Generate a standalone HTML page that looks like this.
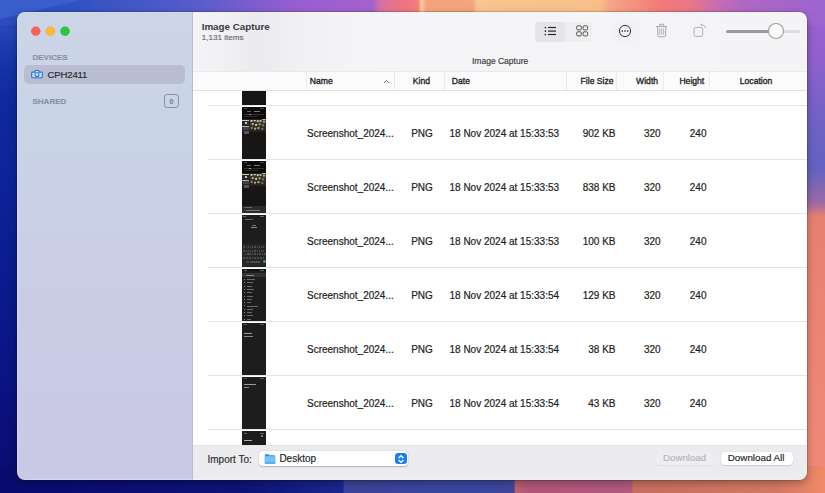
<!DOCTYPE html><html><head><meta charset="utf-8"><style>
*{margin:0;padding:0;box-sizing:border-box}
html,body{width:825px;height:493px;overflow:hidden;font-family:"Liberation Sans",sans-serif}
body{position:relative;background:#1a2a9a}
.a{position:absolute}
.t{position:absolute;white-space:nowrap;line-height:1;-webkit-text-stroke-width:0.15px}
#win{position:absolute;left:17px;top:12px;width:790px;height:468px;border-radius:8px;overflow:hidden;box-shadow:0 0 0 0.5px rgba(0,0,0,0.25),0 3px 8px rgba(0,0,0,0.3)}
#in{position:absolute;left:-17px;top:-12px;width:825px;height:493px}
.hd{position:absolute;top:76.9px;font-size:8.6px;font-weight:normal;color:#222;white-space:nowrap;line-height:1;-webkit-text-stroke:0.32px #222}
.sep{position:absolute;top:72px;width:1px;height:18px;background:#ebebed}
.rs{position:absolute;left:208px;width:599px;height:1px;background:#e5e5e7}
.c{position:absolute;font-size:10px;color:#1e1e1e;white-space:nowrap;line-height:1;-webkit-text-stroke:0.2px #1e1e1e}
.th{position:absolute;left:242px;width:24px;background:#1c1b1b;overflow:hidden}
</style></head><body>
<svg class="a" style="left:0;top:0" width="825" height="493">
<defs>
<linearGradient id="gt" x1="0" y1="0" x2="825" y2="0" gradientUnits="userSpaceOnUse">
<stop offset="0.0000" stop-color="#2c4cbc"/>
<stop offset="0.0970" stop-color="#3153c2"/>
<stop offset="0.2424" stop-color="#5a5ccc"/>
<stop offset="0.3030" stop-color="#7a5ece"/>
<stop offset="0.3636" stop-color="#985fd0"/>
<stop offset="0.4121" stop-color="#a060d0"/>
<stop offset="0.4509" stop-color="#a462cc"/>
<stop offset="0.4606" stop-color="#d070a8"/>
<stop offset="0.4727" stop-color="#e67290"/>
<stop offset="0.4945" stop-color="#ee7680"/>
<stop offset="0.5067" stop-color="#f28078"/>
<stop offset="0.5109" stop-color="#f8cca0"/>
<stop offset="0.5170" stop-color="#f4a47c"/>
<stop offset="0.5733" stop-color="#f4a47e"/>
<stop offset="0.5782" stop-color="#f8c490"/>
<stop offset="0.7273" stop-color="#f8c088"/>
<stop offset="0.7382" stop-color="#f6a688"/>
<stop offset="0.8000" stop-color="#f27c78"/>
<stop offset="0.8352" stop-color="#ec7684"/>
<stop offset="0.8655" stop-color="#cc6eb0"/>
<stop offset="0.8994" stop-color="#b068c4"/>
<stop offset="1.0000" stop-color="#9c64d0"/>
</linearGradient>
<linearGradient id="gb" x1="0" y1="0" x2="825" y2="0" gradientUnits="userSpaceOnUse">
<stop offset="0" stop-color="#0a0a6e"/>
<stop offset="0.30" stop-color="#0e1478"/>
<stop offset="0.416" stop-color="#18298e"/>
<stop offset="0.417" stop-color="#3c4498"/>
<stop offset="0.58" stop-color="#3848a0"/>
<stop offset="0.623" stop-color="#414898"/>
<stop offset="0.625" stop-color="#c06070"/>
<stop offset="0.64" stop-color="#b05878"/>
<stop offset="0.765" stop-color="#b05a80"/>
<stop offset="0.768" stop-color="#c87060"/>
<stop offset="0.94" stop-color="#d27a62"/>
<stop offset="1" stop-color="#f08868"/>
</linearGradient>
<linearGradient id="gl" x1="0" y1="0" x2="0" y2="493" gradientUnits="userSpaceOnUse">
<stop offset="0" stop-color="#2c4cbc"/>
<stop offset="0.06" stop-color="#2446b6"/>
<stop offset="0.12" stop-color="#1636aa"/>
<stop offset="0.2" stop-color="#0e2a9e"/>
<stop offset="0.4" stop-color="#0c2296"/>
<stop offset="0.6" stop-color="#0a1a8c"/>
<stop offset="0.8" stop-color="#0a1280"/>
<stop offset="1" stop-color="#0a0a6c"/>
</linearGradient>
<linearGradient id="gr" x1="0" y1="0" x2="0" y2="493" gradientUnits="userSpaceOnUse">
<stop offset="0" stop-color="#a060d0"/>
<stop offset="0.12" stop-color="#9060d0"/>
<stop offset="0.2" stop-color="#7a62c8"/>
<stop offset="0.34" stop-color="#6262c2"/>
<stop offset="0.41" stop-color="#9a6aa8"/>
<stop offset="0.44" stop-color="#e88070"/>
<stop offset="1" stop-color="#f08a78"/>
</linearGradient>
</defs>
<rect x="0" y="0" width="825" height="493" fill="#1a2a9a"/>
<rect x="0" y="0" width="30" height="493" fill="url(#gl)"/>
<rect x="795" y="0" width="30" height="493" fill="url(#gr)"/>
<rect x="0" y="0" width="825" height="25" fill="url(#gt)"/>
<polygon points="0,0 81,0 0,19" fill="#3a60cc" opacity="0.9"/>
<rect x="0" y="466" width="825" height="27" fill="url(#gb)"/>
</svg>
<div id="win"><div id="in">
<div class="a" style="left:17px;top:12px;width:176px;height:468px;background:linear-gradient(180deg,#ccd5e8 0%,#c9d3e6 30%,#cacde6 58%,#c9c8e5 100%);border-right:1px solid #b8bccc"></div>
<svg class="a" style="left:25px;top:21px" width="50" height="20">
<circle cx="10.8" cy="10.2" r="4.4" fill="#fe5f57" stroke="#e24b44" stroke-width="0.5"/>
<circle cx="25.45" cy="10.2" r="4.4" fill="#febc2e" stroke="#dea224" stroke-width="0.5"/>
<circle cx="40" cy="10.2" r="4.4" fill="#28c840" stroke="#1eac2c" stroke-width="0.5"/>
</svg>
<div class="t" style="left:32.5px;top:53.8px;font-size:8px;font-weight:bold;color:#8b90a4">DEVICES</div>
<div class="a" style="left:24px;top:64.5px;width:161px;height:19.5px;background:#b8bdd0;border-radius:5px"></div>
<svg class="a" style="left:30.5px;top:69px" width="12" height="11" viewBox="0 0 12 11">
<path d="M1.4 3.1 h2.2 l0.8 -1.6 h3.2 l0.8 1.6 h2.2 a0.7 0.7 0 0 1 0.7 0.7 v4.3 a0.7 0.7 0 0 1 -0.7 0.7 h-9.2 a0.7 0.7 0 0 1 -0.7 -0.7 v-4.3 a0.7 0.7 0 0 1 0.7 -0.7z" fill="#d2e2f6" stroke="#1f74e0" stroke-width="1.1"/>
<circle cx="6" cy="5.5" r="2" fill="#dfe8f4" stroke="#1f74e0" stroke-width="1.1"/>
</svg>
<div class="t" style="left:47.6px;top:69.8px;font-size:9.6px;letter-spacing:-0.2px;color:#262a34">CPH2411</div>
<div class="t" style="left:32.5px;top:97.5px;font-size:8px;font-weight:bold;color:#8b90a4">SHARED</div>
<div class="a" style="left:164.2px;top:94px;width:14.6px;height:13.8px;border:1px solid #8a8fa2;border-radius:3.2px"></div>
<div class="t" style="left:169.4px;top:98px;font-size:7px;font-weight:bold;color:#7d8295">0</div>
<div class="a" style="left:193px;top:12px;width:614px;height:59px;background:linear-gradient(90deg,#f5f5f7 0px,#efeff2 40px,#ebebef 65px,#f1f1f4 110px,#f5f5f7 170px,#f4f4f6 100%)"></div>
<div class="t" style="left:201.7px;top:22.4px;font-size:9.8px;font-weight:bold;color:#3a3a3c;-webkit-text-stroke-width:0">Image Capture</div>
<div class="t" style="left:201.7px;top:34.3px;font-size:8.1px;color:#68686d">1,131 items</div>
<div class="t" style="left:472px;top:56.8px;font-size:8.5px;color:#3a3a3a">Image Capture</div>
<div class="a" style="left:535px;top:21.5px;width:57px;height:20px;background:#eeeef0;border-radius:4px"></div>
<div class="a" style="left:535px;top:21.5px;width:30px;height:20px;background:#e5e5e7;border-radius:4px 0 0 4px"></div>
<svg class="a" style="left:540px;top:22px" width="20" height="18">
<circle cx="5.4" cy="5.5" r="0.85" fill="#2a2a2a"/><circle cx="5.4" cy="9.1" r="0.85" fill="#2a2a2a"/><circle cx="5.4" cy="12.5" r="0.85" fill="#2a2a2a"/>
<rect x="8" y="4.9" width="8" height="1.2" fill="#2a2a2a"/><rect x="8" y="8.5" width="8" height="1.2" fill="#2a2a2a"/><rect x="8" y="11.9" width="8" height="1.2" fill="#2a2a2a"/>
</svg>
<svg class="a" style="left:575px;top:24px" width="15" height="14">
<rect x="1.7" y="1.8" width="4.6" height="4.1" rx="1.1" fill="none" stroke="#555" stroke-width="1"/>
<rect x="8.1" y="1.8" width="4.5" height="4.1" rx="1.1" fill="none" stroke="#555" stroke-width="1"/>
<rect x="1.7" y="7.8" width="4.6" height="4.1" rx="1.1" fill="none" stroke="#555" stroke-width="1"/>
<rect x="8.1" y="7.8" width="4.5" height="4.1" rx="1.1" fill="none" stroke="#555" stroke-width="1"/>
</svg>
<div class="a" style="left:612.5px;top:21.5px;width:27.5px;height:20px;background:#f2f2f4;border-radius:4px"></div>
<svg class="a" style="left:617px;top:23px" width="16" height="16">
<circle cx="8" cy="8" r="5.6" fill="none" stroke="#333" stroke-width="1"/>
<circle cx="5.3" cy="8" r="0.85" fill="#333"/><circle cx="8" cy="8" r="0.85" fill="#333"/><circle cx="10.7" cy="8" r="0.85" fill="#333"/>
</svg>
<svg class="a" style="left:654px;top:22px" width="16" height="16">
<path d="M2.2 4.5 h10.9" fill="none" stroke="#a9a9ab" stroke-width="1"/>
<path d="M5.6 4.4 v-2.1 h4.1 v2.1" fill="none" stroke="#a9a9ab" stroke-width="1"/>
<path d="M3.6 4.6 l0.2 9.3 a1 1 0 0 0 1 0.9 h5.8 a1 1 0 0 0 1 -0.9 l0.2 -9.3" fill="none" stroke="#a9a9ab" stroke-width="1"/>
<path d="M5.7 6.3 v6.5 M7.65 6.3 v6.5 M9.6 6.3 v6.5" fill="none" stroke="#a9a9ab" stroke-width="0.85"/>
</svg>
<svg class="a" style="left:690px;top:22px" width="18" height="16">
<rect x="4.1" y="5.4" width="8.6" height="9" rx="1.6" fill="none" stroke="#b0b0b2" stroke-width="1"/>
<path d="M15.9 6.3 A4.6 4.6 0 0 0 11.6 2.7" fill="none" stroke="#b0b0b2" stroke-width="0.9"/>
<path d="M10.1 2.7 l2 -1.3 v2.6z" fill="#b0b0b2"/>
</svg>
<div class="a" style="left:725.6px;top:30px;width:52px;height:2.8px;background:#9a9a9c;border-radius:1.5px"></div>
<div class="a" style="left:776px;top:30px;width:24px;height:2.8px;background:#dcdcde;border-radius:1.5px"></div>
<div class="a" style="left:768.8px;top:24.4px;width:14px;height:14px;border-radius:50%;background:#fbfbfc;box-shadow:0 0 0 1px #9c9c9e"></div>
<div class="a" style="left:193px;top:70.5px;width:614px;height:20px;background:#fbfbfc;border-top:1px solid #e9e9eb;border-bottom:1px solid #e2e2e4"></div>
<div class="sep" style="left:305.5px"></div>
<div class="sep" style="left:394.3px"></div>
<div class="sep" style="left:443.5px"></div>
<div class="sep" style="left:566px"></div>
<div class="sep" style="left:616px"></div>
<div class="sep" style="left:662.6px"></div>
<div class="sep" style="left:708.7px"></div>
<div class="hd" style="left:309.8px">Name</div>
<div class="hd" style="left:412.8px">Kind</div>
<div class="hd" style="left:451.8px">Date</div>
<div class="hd" style="left:580.6px">File Size</div>
<div class="hd" style="left:636.1px">Width</div>
<div class="hd" style="left:679.4px">Height</div>
<div class="hd" style="left:739.8px">Location</div>
<svg class="a" style="left:382px;top:77.5px" width="9" height="7"><path d="M2 5 L4.5 2.5 L7 5" fill="none" stroke="#666" stroke-width="0.9"/></svg>
<div class="a" style="left:193px;top:91px;width:614px;height:354px;background:#fff"></div>
<div class="rs" style="top:105.0px"></div>
<div class="rs" style="top:159.0px"></div>
<div class="rs" style="top:213.0px"></div>
<div class="rs" style="top:267.0px"></div>
<div class="rs" style="top:321.0px"></div>
<div class="rs" style="top:375.0px"></div>
<div class="rs" style="top:429.0px"></div>
<div class="c" style="left:307px;top:129.4px">Screenshot_2024...</div>
<div class="c" style="left:411.2px;top:129.4px">PNG</div>
<div class="c" style="left:449.5px;top:129.4px">18 Nov 2024 at 15:33:53</div>
<div class="c" style="left:555px;width:60.5px;text-align:right;top:129.4px">902 KB</div>
<div class="c" style="left:644px;top:129.4px">320</div>
<div class="c" style="left:689.8px;top:129.4px">240</div>
<div class="c" style="left:307px;top:183.4px">Screenshot_2024...</div>
<div class="c" style="left:411.2px;top:183.4px">PNG</div>
<div class="c" style="left:449.5px;top:183.4px">18 Nov 2024 at 15:33:53</div>
<div class="c" style="left:555px;width:60.5px;text-align:right;top:183.4px">838 KB</div>
<div class="c" style="left:644px;top:183.4px">320</div>
<div class="c" style="left:689.8px;top:183.4px">240</div>
<div class="c" style="left:307px;top:237.4px">Screenshot_2024...</div>
<div class="c" style="left:411.2px;top:237.4px">PNG</div>
<div class="c" style="left:449.5px;top:237.4px">18 Nov 2024 at 15:33:53</div>
<div class="c" style="left:555px;width:60.5px;text-align:right;top:237.4px">100 KB</div>
<div class="c" style="left:644px;top:237.4px">320</div>
<div class="c" style="left:689.8px;top:237.4px">240</div>
<div class="c" style="left:307px;top:291.4px">Screenshot_2024...</div>
<div class="c" style="left:411.2px;top:291.4px">PNG</div>
<div class="c" style="left:449.5px;top:291.4px">18 Nov 2024 at 15:33:54</div>
<div class="c" style="left:555px;width:60.5px;text-align:right;top:291.4px">129 KB</div>
<div class="c" style="left:644px;top:291.4px">320</div>
<div class="c" style="left:689.8px;top:291.4px">240</div>
<div class="c" style="left:307px;top:345.4px">Screenshot_2024...</div>
<div class="c" style="left:411.2px;top:345.4px">PNG</div>
<div class="c" style="left:449.5px;top:345.4px">18 Nov 2024 at 15:33:54</div>
<div class="c" style="left:555px;width:60.5px;text-align:right;top:345.4px">38 KB</div>
<div class="c" style="left:644px;top:345.4px">320</div>
<div class="c" style="left:689.8px;top:345.4px">240</div>
<div class="c" style="left:307px;top:399.4px">Screenshot_2024...</div>
<div class="c" style="left:411.2px;top:399.4px">PNG</div>
<div class="c" style="left:449.5px;top:399.4px">18 Nov 2024 at 15:33:54</div>
<div class="c" style="left:555px;width:60.5px;text-align:right;top:399.4px">43 KB</div>
<div class="c" style="left:644px;top:399.4px">320</div>
<div class="c" style="left:689.8px;top:399.4px">240</div>
<div class="th" style="top:91px;height:13.8px;background:#141414"><div class="a" style="left:0;top:0;width:24px;height:13.8px;filter:blur(0.35px)"></div></div>
<div class="th" style="top:107px;height:52px;background:#181614"><div class="a" style="left:0;top:0;width:24px;height:52px;filter:blur(0.35px)"><div class="a" style="left:0px;top:0px;width:24px;height:11.5px;background:#0b0b0b;"></div><div class="a" style="left:2px;top:1px;width:3px;height:0.7px;background:#444;"></div><div class="a" style="left:18px;top:1px;width:4px;height:0.7px;background:#444;"></div><div class="a" style="left:5px;top:3.6px;width:3.5px;height:0.9px;background:#666;"></div><div class="a" style="left:11.5px;top:3.6px;width:6px;height:0.9px;background:#777;"></div><div class="a" style="left:2px;top:7px;width:20px;height:0.8px;background:#333;"></div><div class="a" style="left:7px;top:7px;width:2px;height:0.9px;background:#999;"></div><div class="a" style="left:2px;top:9.2px;width:14px;height:0.7px;background:#2a2a2a;"></div><div class="a" style="left:0px;top:11.8px;width:24px;height:13px;background:#24221c;"></div><div class="a" style="left:0px;top:12.6px;width:7px;height:1.3px;background:#c8c8c8;"></div><div class="a" style="left:19.5px;top:12.4px;width:4.5px;height:1.2px;background:#b0b0b0;"></div><div class="a" style="left:0.5px;top:14.2px;width:6px;height:3.6px;background:#2a2a26;"></div><div class="a" style="left:2.6px;top:15.2px;width:2px;height:1.4px;background:#c8c8b0;"></div><div class="a" style="left:0px;top:18.6px;width:7px;height:1.1px;background:#b0b0b0;"></div><div class="a" style="left:0.5px;top:20px;width:6px;height:3px;background:#40425a;"></div><div class="a" style="left:7.5px;top:12.5px;width:16.5px;height:11.5px;background:radial-gradient(circle at 1.5px 0.7px,#d8d0a8 0,#d8d0a8 0.6px,rgba(0,0,0,0) 1.6px),radial-gradient(circle at 4.7px 0.3px,#e0d8b8 0,#e0d8b8 0.6px,rgba(0,0,0,0) 1.6px),radial-gradient(circle at 7.8px 1.1px,#c8c0a0 0,#c8c0a0 0.6px,rgba(0,0,0,0) 1.6px),radial-gradient(circle at 10.5px 0.9px,#b8b4a0 0,#b8b4a0 0.6px,rgba(0,0,0,0) 1.6px),radial-gradient(circle at 14.0px 1.7px,#a8a090 0,#a8a090 0.6px,rgba(0,0,0,0) 1.6px),radial-gradient(circle at 2.7px 4.1px,#b8a888 0,#b8a888 0.6px,rgba(0,0,0,0) 1.6px),radial-gradient(circle at 6.1px 4.9px,#d0c8a8 0,#d0c8a8 0.6px,rgba(0,0,0,0) 1.6px),radial-gradient(circle at 9.7px 4.3px,#98a088 0,#98a088 0.6px,rgba(0,0,0,0) 1.6px),radial-gradient(circle at 13.0px 5.3px,#807868 0,#807868 0.6px,rgba(0,0,0,0) 1.6px),radial-gradient(circle at 1.7px 7.9px,#908068 0,#908068 0.6px,rgba(0,0,0,0) 1.6px),radial-gradient(circle at 5.1px 8.7px,#b0a088 0,#b0a088 0.6px,rgba(0,0,0,0) 1.6px),radial-gradient(circle at 8.5px 8.1px,#a8a898 0,#a8a898 0.6px,rgba(0,0,0,0) 1.6px),radial-gradient(circle at 12.3px 8.9px,#7a7060 0,#7a7060 0.6px,rgba(0,0,0,0) 1.6px),linear-gradient(180deg,#3a3628,#2a261e)"></div><div class="a" style="left:1.8px;top:23.8px;width:5px;height:3.6px;background:#555;"></div></div></div>
<div class="th" style="top:161px;height:52px;background:#181614"><div class="a" style="left:0;top:0;width:24px;height:52px;filter:blur(0.35px)"><div class="a" style="left:0px;top:0px;width:24px;height:11.5px;background:#0b0b0b;"></div><div class="a" style="left:2px;top:1px;width:3px;height:0.7px;background:#444;"></div><div class="a" style="left:18px;top:1px;width:4px;height:0.7px;background:#444;"></div><div class="a" style="left:5px;top:3.6px;width:3.5px;height:0.9px;background:#666;"></div><div class="a" style="left:11.5px;top:3.6px;width:6px;height:0.9px;background:#777;"></div><div class="a" style="left:2px;top:7px;width:20px;height:0.8px;background:#333;"></div><div class="a" style="left:7px;top:7px;width:2px;height:0.9px;background:#999;"></div><div class="a" style="left:2px;top:9.2px;width:14px;height:0.7px;background:#2a2a2a;"></div><div class="a" style="left:0px;top:11.8px;width:24px;height:13px;background:#24221c;"></div><div class="a" style="left:0px;top:12.6px;width:7px;height:1.3px;background:#c8c8c8;"></div><div class="a" style="left:19.5px;top:12.4px;width:4.5px;height:1.2px;background:#b0b0b0;"></div><div class="a" style="left:0.5px;top:14.2px;width:6px;height:3.6px;background:#2a2a26;"></div><div class="a" style="left:2.6px;top:15.2px;width:2px;height:1.4px;background:#c8c8b0;"></div><div class="a" style="left:0px;top:18.6px;width:7px;height:1.1px;background:#b0b0b0;"></div><div class="a" style="left:0.5px;top:20px;width:6px;height:3px;background:#40425a;"></div><div class="a" style="left:7.5px;top:12.5px;width:16.5px;height:11.5px;background:radial-gradient(circle at 1.5px 0.7px,#d8d0a8 0,#d8d0a8 0.6px,rgba(0,0,0,0) 1.6px),radial-gradient(circle at 4.7px 0.3px,#e0d8b8 0,#e0d8b8 0.6px,rgba(0,0,0,0) 1.6px),radial-gradient(circle at 7.8px 1.1px,#c8c0a0 0,#c8c0a0 0.6px,rgba(0,0,0,0) 1.6px),radial-gradient(circle at 10.5px 0.9px,#b8b4a0 0,#b8b4a0 0.6px,rgba(0,0,0,0) 1.6px),radial-gradient(circle at 14.0px 1.7px,#a8a090 0,#a8a090 0.6px,rgba(0,0,0,0) 1.6px),radial-gradient(circle at 2.7px 4.1px,#b8a888 0,#b8a888 0.6px,rgba(0,0,0,0) 1.6px),radial-gradient(circle at 6.1px 4.9px,#d0c8a8 0,#d0c8a8 0.6px,rgba(0,0,0,0) 1.6px),radial-gradient(circle at 9.7px 4.3px,#98a088 0,#98a088 0.6px,rgba(0,0,0,0) 1.6px),radial-gradient(circle at 13.0px 5.3px,#807868 0,#807868 0.6px,rgba(0,0,0,0) 1.6px),radial-gradient(circle at 1.7px 7.9px,#908068 0,#908068 0.6px,rgba(0,0,0,0) 1.6px),radial-gradient(circle at 5.1px 8.7px,#b0a088 0,#b0a088 0.6px,rgba(0,0,0,0) 1.6px),radial-gradient(circle at 8.5px 8.1px,#a8a898 0,#a8a898 0.6px,rgba(0,0,0,0) 1.6px),radial-gradient(circle at 12.3px 8.9px,#7a7060 0,#7a7060 0.6px,rgba(0,0,0,0) 1.6px),linear-gradient(180deg,#3a3628,#2a261e)"></div><div class="a" style="left:1.8px;top:23.8px;width:5px;height:3.6px;background:#555;"></div><div class="a" style="left:0px;top:44.5px;width:24px;height:7px;background:#2c2c2c;"></div><div class="a" style="left:2px;top:46px;width:8px;height:0.8px;background:#666;"></div><div class="a" style="left:4px;top:49px;width:14px;height:1px;background:#777;"></div></div></div>
<div class="th" style="top:215px;height:52px;background:#1e1d1d"><div class="a" style="left:0;top:0;width:24px;height:52px;filter:blur(0.35px)"><div class="a" style="left:1px;top:1px;width:3px;height:0.8px;background:#666;"></div><div class="a" style="left:18px;top:1px;width:4px;height:0.8px;background:#666;"></div><div class="a" style="left:3px;top:4px;width:8px;height:0.9px;background:#666;"></div><div class="a" style="left:10px;top:10px;width:4px;height:0.9px;background:#777;"></div><div class="a" style="left:9px;top:12px;width:6px;height:0.9px;background:#888;"></div><div class="a" style="left:0px;top:29px;width:24px;height:23px;background:#262626;"></div><div class="a" style="left:1.3px;top:31px;width:1.4000000000000001px;height:2.2px;background:#4c4c4c;"></div><div class="a" style="left:3.5px;top:31px;width:1.4000000000000001px;height:2.2px;background:#4c4c4c;"></div><div class="a" style="left:5.7px;top:31px;width:1.4000000000000001px;height:2.2px;background:#4c4c4c;"></div><div class="a" style="left:7.9px;top:31px;width:1.4000000000000001px;height:2.2px;background:#4c4c4c;"></div><div class="a" style="left:10.100000000000001px;top:31px;width:1.4000000000000001px;height:2.2px;background:#4c4c4c;"></div><div class="a" style="left:12.3px;top:31px;width:1.4000000000000001px;height:2.2px;background:#4c4c4c;"></div><div class="a" style="left:14.500000000000002px;top:31px;width:1.4000000000000001px;height:2.2px;background:#4c4c4c;"></div><div class="a" style="left:16.700000000000003px;top:31px;width:1.4000000000000001px;height:2.2px;background:#4c4c4c;"></div><div class="a" style="left:18.900000000000002px;top:31px;width:1.4000000000000001px;height:2.2px;background:#4c4c4c;"></div><div class="a" style="left:21.1px;top:31px;width:1.4000000000000001px;height:2.2px;background:#4c4c4c;"></div><div class="a" style="left:1.3px;top:34.5px;width:1.4000000000000001px;height:2.2px;background:#4c4c4c;"></div><div class="a" style="left:3.5px;top:34.5px;width:1.4000000000000001px;height:2.2px;background:#4c4c4c;"></div><div class="a" style="left:5.7px;top:34.5px;width:1.4000000000000001px;height:2.2px;background:#4c4c4c;"></div><div class="a" style="left:7.9px;top:34.5px;width:1.4000000000000001px;height:2.2px;background:#4c4c4c;"></div><div class="a" style="left:10.100000000000001px;top:34.5px;width:1.4000000000000001px;height:2.2px;background:#4c4c4c;"></div><div class="a" style="left:12.3px;top:34.5px;width:1.4000000000000001px;height:2.2px;background:#4c4c4c;"></div><div class="a" style="left:14.500000000000002px;top:34.5px;width:1.4000000000000001px;height:2.2px;background:#4c4c4c;"></div><div class="a" style="left:16.700000000000003px;top:34.5px;width:1.4000000000000001px;height:2.2px;background:#4c4c4c;"></div><div class="a" style="left:18.900000000000002px;top:34.5px;width:1.4000000000000001px;height:2.2px;background:#4c4c4c;"></div><div class="a" style="left:21.1px;top:34.5px;width:1.4000000000000001px;height:2.2px;background:#4c4c4c;"></div><div class="a" style="left:2.5px;top:38px;width:1.6444444444444446px;height:2.2px;background:#4c4c4c;"></div><div class="a" style="left:4.944444444444445px;top:38px;width:1.6444444444444446px;height:2.2px;background:#4c4c4c;"></div><div class="a" style="left:7.388888888888889px;top:38px;width:1.6444444444444446px;height:2.2px;background:#4c4c4c;"></div><div class="a" style="left:9.833333333333334px;top:38px;width:1.6444444444444446px;height:2.2px;background:#4c4c4c;"></div><div class="a" style="left:12.277777777777779px;top:38px;width:1.6444444444444446px;height:2.2px;background:#4c4c4c;"></div><div class="a" style="left:14.722222222222223px;top:38px;width:1.6444444444444446px;height:2.2px;background:#4c4c4c;"></div><div class="a" style="left:17.166666666666668px;top:38px;width:1.6444444444444446px;height:2.2px;background:#4c4c4c;"></div><div class="a" style="left:19.611111111111114px;top:38px;width:1.6444444444444446px;height:2.2px;background:#4c4c4c;"></div><div class="a" style="left:22.055555555555557px;top:38px;width:1.6444444444444446px;height:2.2px;background:#4c4c4c;"></div><div class="a" style="left:1.3px;top:41.5px;width:1.95px;height:2.2px;background:#4c4c4c;"></div><div class="a" style="left:4.05px;top:41.5px;width:1.95px;height:2.2px;background:#4c4c4c;"></div><div class="a" style="left:6.8px;top:41.5px;width:1.95px;height:2.2px;background:#4c4c4c;"></div><div class="a" style="left:9.55px;top:41.5px;width:1.95px;height:2.2px;background:#4c4c4c;"></div><div class="a" style="left:12.3px;top:41.5px;width:1.95px;height:2.2px;background:#4c4c4c;"></div><div class="a" style="left:15.05px;top:41.5px;width:1.95px;height:2.2px;background:#4c4c4c;"></div><div class="a" style="left:17.8px;top:41.5px;width:1.95px;height:2.2px;background:#4c4c4c;"></div><div class="a" style="left:20.55px;top:41.5px;width:1.95px;height:2.2px;background:#4c4c4c;"></div><div class="a" style="left:4px;top:45.5px;width:3px;height:2.2px;background:#444;"></div><div class="a" style="left:8px;top:45.5px;width:10px;height:2.2px;background:#4c4c4c;"></div><div class="a" style="left:20.5px;top:45px;width:3px;height:3px;background:#3a9a70;border-radius:50%"></div></div></div>
<div class="th" style="top:269px;height:52px;background:#1e1d1d"><div class="a" style="left:0;top:0;width:24px;height:52px;filter:blur(0.35px)"><div class="a" style="left:0px;top:0px;width:24px;height:1.5px;background:#111;"></div><div class="a" style="left:2px;top:1px;width:3px;height:0.8px;background:#666;"></div><div class="a" style="left:18px;top:1px;width:4px;height:0.8px;background:#666;"></div><div class="a" style="left:0px;top:4px;width:24px;height:4px;background:#333;"></div><div class="a" style="left:4px;top:5.5px;width:8px;height:1px;background:#888;"></div><div class="a" style="left:1.8px;top:10.0px;width:1.1px;height:1.1px;background:#b0b0b0;border-radius:50%"></div><div class="a" style="left:4.5px;top:10.1px;width:8px;height:0.9px;background:#6a6a6a;"></div><div class="a" style="left:1.8px;top:13.3px;width:1.1px;height:1.1px;background:#b0b0b0;border-radius:50%"></div><div class="a" style="left:4.5px;top:13.4px;width:6px;height:0.9px;background:#6a6a6a;"></div><div class="a" style="left:1.8px;top:16.6px;width:1.1px;height:1.1px;background:#b0b0b0;border-radius:50%"></div><div class="a" style="left:4.5px;top:16.700000000000003px;width:5px;height:0.9px;background:#6a6a6a;"></div><div class="a" style="left:1.8px;top:19.9px;width:1.1px;height:1.1px;background:#b0b0b0;border-radius:50%"></div><div class="a" style="left:4.5px;top:20.0px;width:7px;height:0.9px;background:#6a6a6a;"></div><div class="a" style="left:1.8px;top:23.2px;width:1.1px;height:1.1px;background:#b0b0b0;border-radius:50%"></div><div class="a" style="left:4.5px;top:23.3px;width:5px;height:0.9px;background:#6a6a6a;"></div><div class="a" style="left:1.8px;top:26.5px;width:1.1px;height:1.1px;background:#b0b0b0;border-radius:50%"></div><div class="a" style="left:4.5px;top:26.6px;width:6px;height:0.9px;background:#6a6a6a;"></div><div class="a" style="left:1.8px;top:29.799999999999997px;width:1.1px;height:1.1px;background:#b0b0b0;border-radius:50%"></div><div class="a" style="left:4.5px;top:29.9px;width:5px;height:0.9px;background:#6a6a6a;"></div><div class="a" style="left:1.8px;top:33.099999999999994px;width:1.1px;height:1.1px;background:#b0b0b0;border-radius:50%"></div><div class="a" style="left:4.5px;top:33.199999999999996px;width:4px;height:0.9px;background:#6a6a6a;"></div><div class="a" style="left:1.8px;top:36.4px;width:1.1px;height:1.1px;background:#b0b0b0;border-radius:50%"></div><div class="a" style="left:4.5px;top:36.5px;width:11px;height:0.9px;background:#6a6a6a;"></div><div class="a" style="left:1.8px;top:39.7px;width:1.1px;height:1.1px;background:#b0b0b0;border-radius:50%"></div><div class="a" style="left:4.5px;top:39.800000000000004px;width:6px;height:0.9px;background:#6a6a6a;"></div><div class="a" style="left:1.8px;top:43.0px;width:1.1px;height:1.1px;background:#b0b0b0;border-radius:50%"></div><div class="a" style="left:4.5px;top:43.1px;width:5px;height:0.9px;background:#6a6a6a;"></div><div class="a" style="left:1.8px;top:46.3px;width:1.1px;height:1.1px;background:#b0b0b0;border-radius:50%"></div><div class="a" style="left:4.5px;top:46.4px;width:6px;height:0.9px;background:#6a6a6a;"></div><div class="a" style="left:1.8px;top:49.599999999999994px;width:1.1px;height:1.1px;background:#b0b0b0;border-radius:50%"></div><div class="a" style="left:4.5px;top:49.699999999999996px;width:4px;height:0.9px;background:#6a6a6a;"></div></div></div>
<div class="th" style="top:323px;height:52px;background:#1e1d1d"><div class="a" style="left:0;top:0;width:24px;height:52px;filter:blur(0.35px)"><div class="a" style="left:2px;top:1px;width:3px;height:0.8px;background:#555;"></div><div class="a" style="left:18px;top:1px;width:4px;height:0.8px;background:#555;"></div><div class="a" style="left:2px;top:9.6px;width:8px;height:1.2px;background:#9a9a9a;"></div><div class="a" style="left:2px;top:12.5px;width:9px;height:1.2px;background:#8a8a8a;"></div></div></div>
<div class="th" style="top:377px;height:52px;background:#1e1d1d"><div class="a" style="left:0;top:0;width:24px;height:52px;filter:blur(0.35px)"><div class="a" style="left:2px;top:1px;width:3px;height:0.8px;background:#555;"></div><div class="a" style="left:18px;top:1px;width:4px;height:0.8px;background:#555;"></div><div class="a" style="left:2px;top:7.3px;width:12px;height:1.2px;background:#9a9a9a;"></div><div class="a" style="left:2px;top:10.2px;width:5px;height:1.2px;background:#8a8a8a;"></div></div></div>
<div class="th" style="top:431px;height:14px;background:#1e1d1d"><div class="a" style="left:0;top:0;width:24px;height:14px;filter:blur(0.35px)"><div class="a" style="left:2px;top:1.5px;width:3px;height:0.8px;background:#666;"></div><div class="a" style="left:18px;top:1.5px;width:4px;height:0.8px;background:#666;"></div><div class="a" style="left:19px;top:4px;width:2px;height:2px;background:#777;"></div><div class="a" style="left:2px;top:9px;width:8px;height:1.4px;background:#aaa;"></div></div></div>
<div class="a" style="left:193px;top:444.8px;width:614px;height:36px;background:#ececef;border-top:1px solid #e3e3e5"></div>
<div class="t" style="left:207.5px;top:455px;font-size:10px;color:#2a2a2a">Import To:</div>
<div class="a" style="left:258.8px;top:450.5px;width:149px;height:15px;background:#fff;border-radius:4px;box-shadow:0 0.5px 1.5px rgba(0,0,0,0.25)"></div>
<svg class="a" style="left:264px;top:453px" width="12" height="11">
<path d="M0.8 2 a0.8 0.8 0 0 1 0.8 -0.8 h3 l1 1.1 h4.8 a0.8 0.8 0 0 1 0.8 0.8 v6.8 a0.8 0.8 0 0 1 -0.8 0.8 h-8.8 a0.8 0.8 0 0 1 -0.8 -0.8z" fill="#3a8ed6"/>
<rect x="0.8" y="3.2" width="10.4" height="7.6" rx="0.6" fill="#72c4f4"/>
<rect x="0.8" y="9" width="10.4" height="1.8" rx="0.6" fill="#58acea"/>
</svg>
<div class="t" style="left:279.4px;top:454px;font-size:10px;color:#222">Desktop</div>
<div class="a" style="left:395.1px;top:452.8px;width:11.8px;height:11.2px;background:#1d7df6;border-radius:3px"></div>
<svg class="a" style="left:395.1px;top:452.8px" width="12" height="12">
<path d="M3.6 4.9 L6 2.7 L8.4 4.9 M3.6 7.1 L6 9.3 L8.4 7.1" fill="none" stroke="#fff" stroke-width="1.35"/>
</svg>
<div class="a" style="left:656.4px;top:451.4px;width:58px;height:13.5px;background:#eeeef0;border-radius:4px;box-shadow:0 0.5px 1px rgba(0,0,0,0.06)"></div>
<div class="t" style="left:663.1px;top:453.2px;font-size:9.7px;color:#b4b4b6">Download</div>
<div class="a" style="left:720.9px;top:451.6px;width:72px;height:13.5px;background:#fff;border-radius:4px;box-shadow:0 0.5px 1.5px rgba(0,0,0,0.22)"></div>
<div class="t" style="left:727.8px;top:453.3px;font-size:9.8px;color:#1e1e1e">Download All</div>
</div><div class="a" style="left:0;top:0;width:790px;height:468px;border-radius:8px;box-shadow:inset 0 0 0 0.6px rgba(255,255,255,0.45)"></div></div>
</body></html>
